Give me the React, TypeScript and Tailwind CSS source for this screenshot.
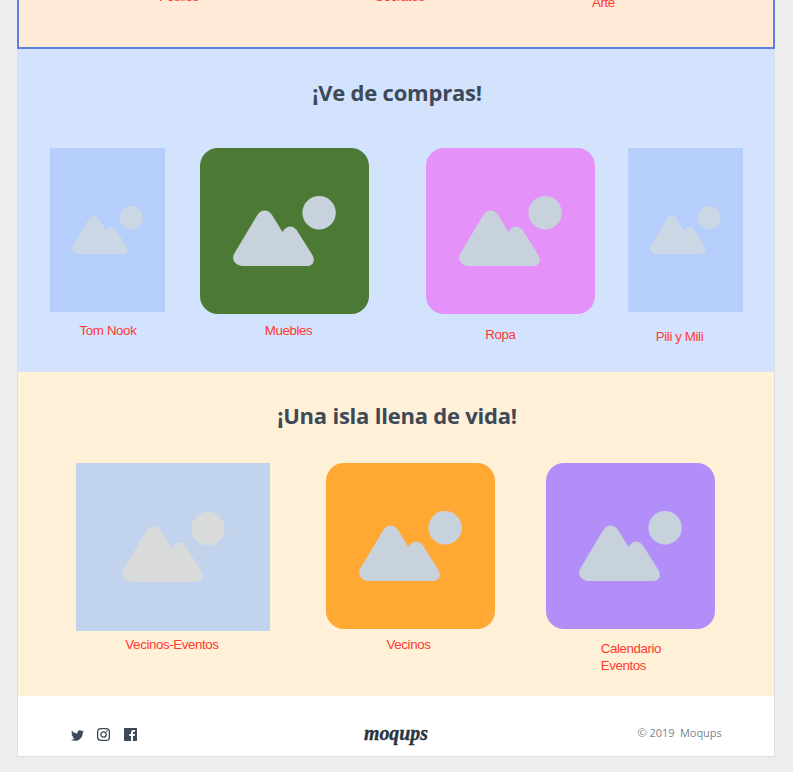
import type { ReactNode } from "react";
import { FaTwitter } from "react-icons/fa";

function Landscape({ className }: { className: string }) {
  return (
    <svg viewBox="0 0 103 70.5" className={className} fill="currentColor" aria-hidden="true">
      <path d="M14 70.5C1.5 70.5-2.3 63 1.6 57L23.7 20C28 12.8 35.3 12.8 39.7 20L49.5 36C53.3 29.2 60 28.7 63.8 34.3L79.4 59C82.8 65.5 80 70.5 72 70.5Z" />
      <circle cx="86.1" cy="16.8" r="16.7" />
    </svg>
  );
}

function Card({ box, art, icon, label, children }: { box: string; art: string; icon: string; label: string; children: ReactNode }) {
  return (
    <figure className={`flex shrink-0 flex-col items-center ${box}`}>
      <div className={`flex w-full shrink-0 items-center justify-center ${art}`}>
        <Landscape className={icon} />
      </div>
      <figcaption className={`whitespace-nowrap text-[13.33px] leading-[17px] tracking-[-0.4px] text-[#ff3a30] ${label}`}>{children}</figcaption>
    </figure>
  );
}

const heading = "pl-[2px] text-center font-['Open_Sans',sans-serif] text-[22px] font-bold leading-[30px] tracking-[-0.22px] text-[#3d4957]";

export default function App() {
  return (
    <div className="h-[772px] w-[793px] overflow-hidden bg-[#ededed] pl-[17px] font-['Liberation_Sans',Arial,sans-serif]">
      <div className="w-[758px]">
        <section className="flex h-[49px] items-start overflow-hidden border-x-2 border-b-2 border-[#5b80e0] bg-[#ffebd7] text-[13.33px] leading-[17px] tracking-[-0.4px] text-[#ff3a30]">
          <span className="-mt-[12px] ml-[140px] w-[216px]">Fósiles</span>
          <span className="-mt-[12px] w-[217px]">Sócrates</span>
          <span className="-mt-[6px]">Arte</span>
        </section>
        <main className="border-x border-b border-[#dfdfdf] bg-white">
          <section className="h-[323px] bg-[#d3e3fd] pt-[28px]">
            <h2 className={heading}>¡Ve de compras!</h2>
            <div className="mt-[41px] flex pl-[32px]">
              <Card box="w-[115px]" art="h-[164px] bg-[#b5cefb] text-[#cbd7e5]" icon="w-[71px]" label="mt-[10px] ml-[1px]">Tom Nook</Card>
              <Card box="ml-[35px] w-[169px]" art="h-[166px] rounded-[18px] bg-[#4c7a34] text-[#c8d2dd]" icon="w-[103px]" label="mt-[8px] ml-[8px]">Muebles</Card>
              <Card box="ml-[57px] w-[169px]" art="h-[166px] rounded-[18px] bg-[#e591fa] text-[#c8d2dd]" icon="w-[103px]" label="mt-[12px] ml-[-20px]">Ropa</Card>
              <Card box="ml-[33px] w-[115px]" art="h-[164px] bg-[#b5cefb] text-[#cbd7e5]" icon="w-[71px]" label="mt-[16px] ml-[-12px]">Pili y Mili</Card>
            </div>
          </section>
          <section className="h-[324px] bg-[#fff0d8] pt-[28px]">
            <h2 className={heading}>¡Una isla llena de vida!</h2>
            <div className="mt-[33px] flex pl-[58px]">
              <Card box="w-[194px]" art="h-[167.5px] bg-[#c2d3ee] text-[#d9dbda]" icon="w-[103px]" label="mt-[5.5px] ml-[-2px]">Vecinos-Eventos</Card>
              <Card box="ml-[56px] w-[169px]" art="h-[166px] rounded-[18px] bg-[#ffa834] text-[#c8d2dd]" icon="w-[103px]" label="mt-[7px] ml-[-4px]">Vecinos</Card>
              <Card box="ml-[51.4px] w-[169px]" art="h-[166px] rounded-[18px] bg-[#b28ff8] text-[#c8d2dd]" icon="w-[103px]" label="mt-[11px]">
                Calendario<br />Eventos
              </Card>
            </div>
          </section>
          <footer className="flex h-[60px] items-start text-[#3d4957]">
            <div className="ml-[53px] mt-[32px] flex gap-[13px]">
              <FaTwitter className="mt-px size-[13px]" />
              <svg className="size-[13px]" viewBox="0 0 13 13" fill="none" stroke="currentColor" strokeWidth="1.3" aria-label="Instagram">
                <rect x=".65" y=".65" width="11.7" height="11.7" rx="3.2" />
                <circle cx="6.5" cy="6.5" r="2.7" />
                <circle cx="9.9" cy="3.1" r=".8" fill="currentColor" stroke="none" />
              </svg>
              <svg className="ml-[1px] size-[13px]" viewBox="0 0 13 13" fill="currentColor" aria-label="Facebook">
                <path d="M.7 0H12.3Q13 0 13 .7V12.3Q13 13 12.3 13H9V8H10.7L11 6H9V4.8Q9 3.8 10 3.8H11.1V2H9.4Q7 2 7 4.4V6H5.3V8H7V13H.7Q0 13 0 12.3V.7Q0 0 .7 0Z" />
              </svg>
            </div>
            <svg className="ml-[226px] mt-[25px] h-[26px] w-[66px]" viewBox="0 0 66 26" aria-label="moqups">
              <text x="1" y="18.6" textLength="64" lengthAdjust="spacingAndGlyphs" stroke="#28343f" strokeWidth=".4" className="fill-[#28343f] font-['Liberation_Serif',serif] text-[21.5px] font-bold italic">moqups</text>
            </svg>
            <p className="ml-[208.5px] mt-[28px] whitespace-pre font-['Open_Sans',sans-serif] text-[11px] leading-[17px] tracking-[-0.05px] text-[#778391]">© 2019  Moqups</p>
          </footer>
        </main>
      </div>
    </div>
  );
}
